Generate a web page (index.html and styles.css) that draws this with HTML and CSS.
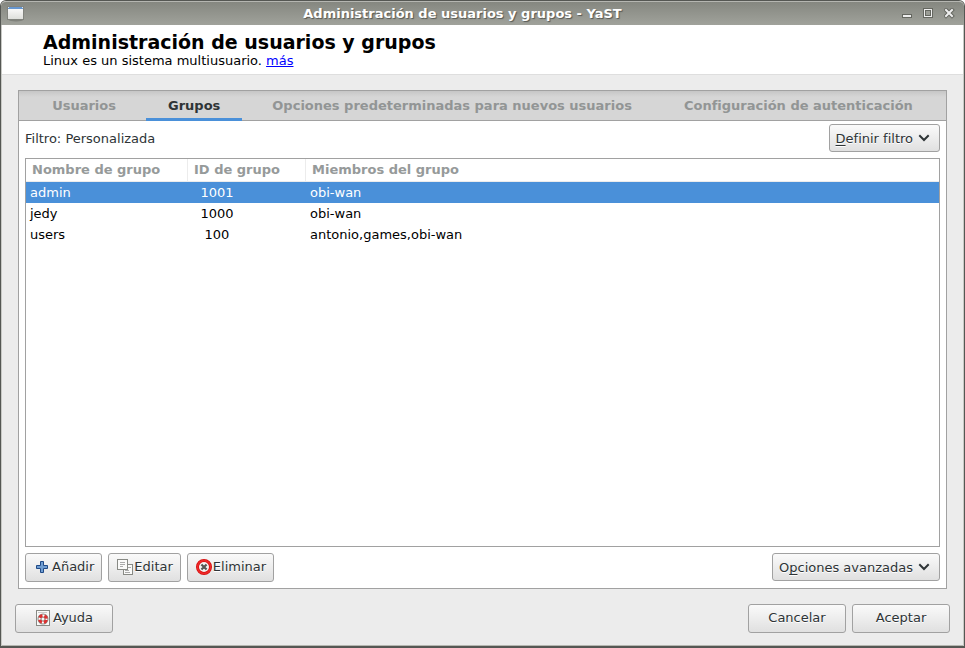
FILE: index.html
```html
<!DOCTYPE html>
<html lang="es">
<head>
<meta charset="utf-8">
<title>Administración de usuarios y grupos - YaST</title>
<link rel="stylesheet" href="styles.css">
</head>
<body>
<div class="window">
  <header class="titlebar">
    <svg class="app-icon" width="18" height="16" viewBox="0 0 18 16" aria-hidden="true">
      <defs><linearGradient id="app" x1="0" y1="0" x2="0" y2="1"><stop offset="0" stop-color="#fff"/><stop offset="1" stop-color="#dddeda"/></linearGradient></defs>
      <ellipse cx="9" cy="14" rx="7" ry="1.5" fill="#666862" opacity=".5"/>
      <rect x=".5" y=".5" width="16" height="13" fill="url(#app)" stroke="#81837d"/>
      <path d="M1 2h15" stroke="#6797d0" stroke-width="2"/>
      <path d="M1 1.5h1M15 1.5h1" stroke="#dbe5f0"/>
    </svg>
    <span class="titlebar-text">Administración de usuarios y grupos - YaST</span>
    <div class="window-controls">
      <button class="window-control" type="button" aria-label="Minimizar"><svg width="11" height="11" viewBox="0 0 11 11"><rect x=".5" y="6.5" width="9" height="3" fill="#eee" stroke="#656760"/></svg></button>
      <button class="window-control" type="button" aria-label="Maximizar"><svg width="11" height="11" viewBox="0 0 11 11"><rect x=".5" y=".5" width="9" height="9" fill="#9a9c95" stroke="#656760"/><rect x="1.5" y="1.5" width="7" height="7" fill="none" stroke="#eee"/><rect x="2.5" y="2.5" width="5" height="5" fill="none" stroke="#656760"/></svg></button>
      <button class="window-control" type="button" aria-label="Cerrar"><svg width="11" height="11" viewBox="0 0 11 11"><path d="M2 2l6 6M8 2l-6 6" stroke="#656760" stroke-width="4" stroke-linecap="square"/><path d="M2 2l6 6M8 2l-6 6" stroke="#eee" stroke-width="2" stroke-linecap="square"/></svg></button>
    </div>
  </header>

  <section class="intro">
    <h1 class="intro-title">Administración de usuarios y grupos</h1>
    <p class="intro-text">Linux es un sistema multiusuario. <a class="intro-link" href="#">más</a></p>
  </section>

  <main class="notebook">
    <div class="tabs" role="tablist">
      <button class="tab" type="button" role="tab" aria-selected="false">Usuarios</button>
      <button class="tab tab-active" type="button" role="tab" aria-selected="true">Grupos</button>
      <button class="tab" type="button" role="tab" aria-selected="false">Opciones predeterminadas para nuevos usuarios</button>
      <button class="tab" type="button" role="tab" aria-selected="false">Configuración de autenticación</button>
    </div>
    <div class="panel" role="tabpanel">
      <div class="bar">
        <span class="filter">Filtro: Personalizada</span>
        <button class="button button-menu" type="button"><span><u class="key">D</u>efinir filtro</span><svg width="12" height="8" viewBox="0 0 12 8" aria-hidden="true"><path d="M2 2l4 4 4-4" fill="none" stroke="#2e3436" stroke-width="2" stroke-linecap="square"/></svg></button>
      </div>
      <div class="list">
        <table class="groups">
          <colgroup><col class="col-name"><col class="col-id"><col></colgroup>
          <thead><tr><th scope="col">Nombre de grupo</th><th scope="col">ID de grupo</th><th scope="col">Miembros del grupo</th></tr></thead>
          <tbody>
            <tr class="selected"><td>admin</td><td class="cell-id">1001</td><td>obi-wan</td></tr>
            <tr><td>jedy</td><td class="cell-id">1000</td><td>obi-wan</td></tr>
            <tr><td>users</td><td class="cell-id">100</td><td>antonio,games,obi-wan</td></tr>
          </tbody>
        </table>
      </div>
      <div class="bar bar-bottom">
        <div class="button-group">
          <button class="button button-icon button-add" type="button"><svg width="16" height="16" viewBox="0 0 16 16" aria-hidden="true"><path d="M6.5 2.5h3v4h4v3h-4v4h-3v-4h-4v-3h4z" fill="#709ed2" stroke="#204a87" stroke-linejoin="round"/></svg><span>Añadir</span></button>
          <button class="button button-icon" type="button"><svg width="16" height="16" viewBox="0 0 16 16" aria-hidden="true"><rect x="6.5" y="5.5" width="9" height="10" fill="#fafaf9" stroke="#888a85"/><path d="M11 8.5h3M8 11.5h4M8 13.5h5" stroke="#aaa"/><rect x=".5" y=".5" width="10" height="10" fill="#fafaf9" stroke="#888a85"/><path d="M3 3.5h5M3 5.5h5M3 7.5h3" stroke="#aaa"/></svg><span>Editar</span></button>
          <button class="button button-icon" type="button"><svg width="16" height="16" viewBox="0 0 16 16" aria-hidden="true"><circle cx="8" cy="8" r="6.5" fill="#f4f4f2" stroke="#d40f0f" stroke-width="3"/><circle cx="8" cy="8" r="6.5" fill="none" stroke="#ef2929" stroke-width="1.5"/><path d="M6.2 6.2l3.600 3.600M9.800 6.200l-3.600 3.600" stroke="#555753" stroke-width="2.200" stroke-linecap="square"/></svg><span>Eliminar</span></button>
        </div>
        <button class="button button-menu" type="button"><span>O<u class="key">p</u>ciones avanzadas</span><svg width="12" height="8" viewBox="0 0 12 8" aria-hidden="true"><path d="M2 2l4 4 4-4" fill="none" stroke="#2e3436" stroke-width="2" stroke-linecap="square"/></svg></button>
      </div>
    </div>
  </main>

  <footer class="footer">
    <button class="button button-wide" type="button"><svg width="16" height="16" viewBox="0 0 16 16" aria-hidden="true"><rect x="1.5" y=".5" width="13" height="15" fill="#fafaf9" stroke="#888a85"/><path d="M3 2.5h9" stroke="#ccc"/><circle cx="8" cy="9" r="3.5" fill="none" stroke="#888a85" stroke-width="4"/><circle cx="8" cy="9" r="3.5" fill="none" stroke="#fff" stroke-width="2"/><circle cx="8" cy="9" r="3.5" fill="none" stroke="#dc3030" stroke-width="3" stroke-dasharray="3.5 2" stroke-dashoffset="-1"/></svg><span>Ayuda</span></button>
    <div class="button-group">
      <button class="button button-wide" type="button">Cancelar</button>
      <button class="button button-wide" type="button">Aceptar</button>
    </div>
  </footer>
</div>
</body>
</html>
```
FILE: styles.css
```css
* { box-sizing: border-box; }

body {
  margin: 0;
  background: #fff;
  color: #2e3436;
  font: 13px/17px "DejaVu Sans", sans-serif;
}

button { font: inherit; color: inherit; }

.window {
  display: flex;
  flex-direction: column;
  min-height: 100vh;
  border: 1px solid #555753;
  border-bottom-width: 2px;
  border-radius: 6px 6px 0 0;
  background: #ececec;
  box-shadow: inset 1px 0 #c8c9c5, inset -1px 0 #c8c9c5, inset 0 -1px #b5b6b0;
}

.titlebar {
  display: grid;
  grid-template-columns: 24px 1fr 64px;
  align-items: center;
  height: 24px;
  padding: 0 6px;
  border-top: 1px solid #b5b6b1;
  border-radius: 5px 5px 0 0;
  background: linear-gradient(#858780, #a0a29b);
}

.titlebar-text {
  color: #fff;
  font-weight: bold;
  text-align: center;
  text-shadow: 1px 1px 1px #555753;
}

.window-controls {
  display: flex;
  justify-content: flex-end;
  gap: 10px;
  padding-right: 3px;
}

.window-control {
  display: flex;
  padding: 0;
  border: 0;
  background: none;
}

.intro {
  margin: 0 1px;
  padding: 7px 41px 5px;
  border-bottom: 1px solid #dedede;
  background: #fff;
  color: #000;
}

.intro-title {
  margin: 0;
  font-size: 19px;
  line-height: 20px;
}

.intro-text { margin: 0; }

.intro-link { color: #00f; }

.notebook {
  display: flex;
  flex: 1;
  flex-direction: column;
  margin: 15px 17px 0;
  border: 1px solid #a1a1a1;
  background: #fff;
}

.tabs {
  display: flex;
  justify-content: center;
  gap: 8px;
  height: 30px;
  border-bottom: 1px solid #a1a1a1;
  background: linear-gradient(#c6c6c6, #d6d6d6 6px);
}

.tab {
  height: 30px;
  padding: 2px 22px 0;
  border: 0;
  border-bottom: 3px solid transparent;
  background: none;
  color: #929595;
  font-weight: bold;
}

.tab-active {
  border-bottom-color: #4a90d9;
  color: #2e3436;
}

.panel {
  display: flex;
  flex: 1;
  flex-direction: column;
  gap: 6px;
  padding: 3px 6px 6px;
}

.bar {
  display: flex;
  align-items: center;
  justify-content: space-between;
}

.bar-bottom { align-items: flex-start; }

.button-group {
  display: flex;
  gap: 6px;
}

.button {
  display: flex;
  align-items: center;
  justify-content: center;
  height: 29px;
  padding: 0 0 2px;
  border: 1px solid #a1a1a1;
  border-radius: 3px;
  background: linear-gradient(#fafafa, #e0e0e0);
  text-shadow: 0 1px #fff;
}

.button-menu {
  gap: 5px;
  height: 28px;
  padding: 0 9px 0 6px;
}

.button-icon {
  gap: 1px;
  padding: 0 7px 2px 8px;
}

.button-add { gap: 2px; }

.button-wide {
  width: 98px;
  gap: 2px;
}

.key { text-underline-offset: 2px; text-decoration-skip-ink: none; }

.list {
  flex: 1;
  border: 1px solid #a1a1a1;
  background: #fff;
}

.groups {
  width: 100%;
  border-collapse: separate;
  border-spacing: 0;
  table-layout: fixed;
  color: #000;
}

.col-name { width: 162px; }

.col-id { width: 118px; }

.groups th {
  height: 23px;
  padding: 0 6px 2px;
  border-right: 1px solid #ececec;
  border-bottom: 1px solid #ececec;
  color: #969a9a;
  text-align: left;
}

.groups th:last-child { border-right: 0; }

.groups td {
  height: 21px;
  padding: 0 4px;
}

.groups .cell-id {
  padding-right: 64px;
  text-align: center;
}

.groups .selected {
  background: #4a90d9;
  color: #fff;
}

.footer {
  display: flex;
  justify-content: space-between;
  padding: 15px 14px 13px;
}
```
